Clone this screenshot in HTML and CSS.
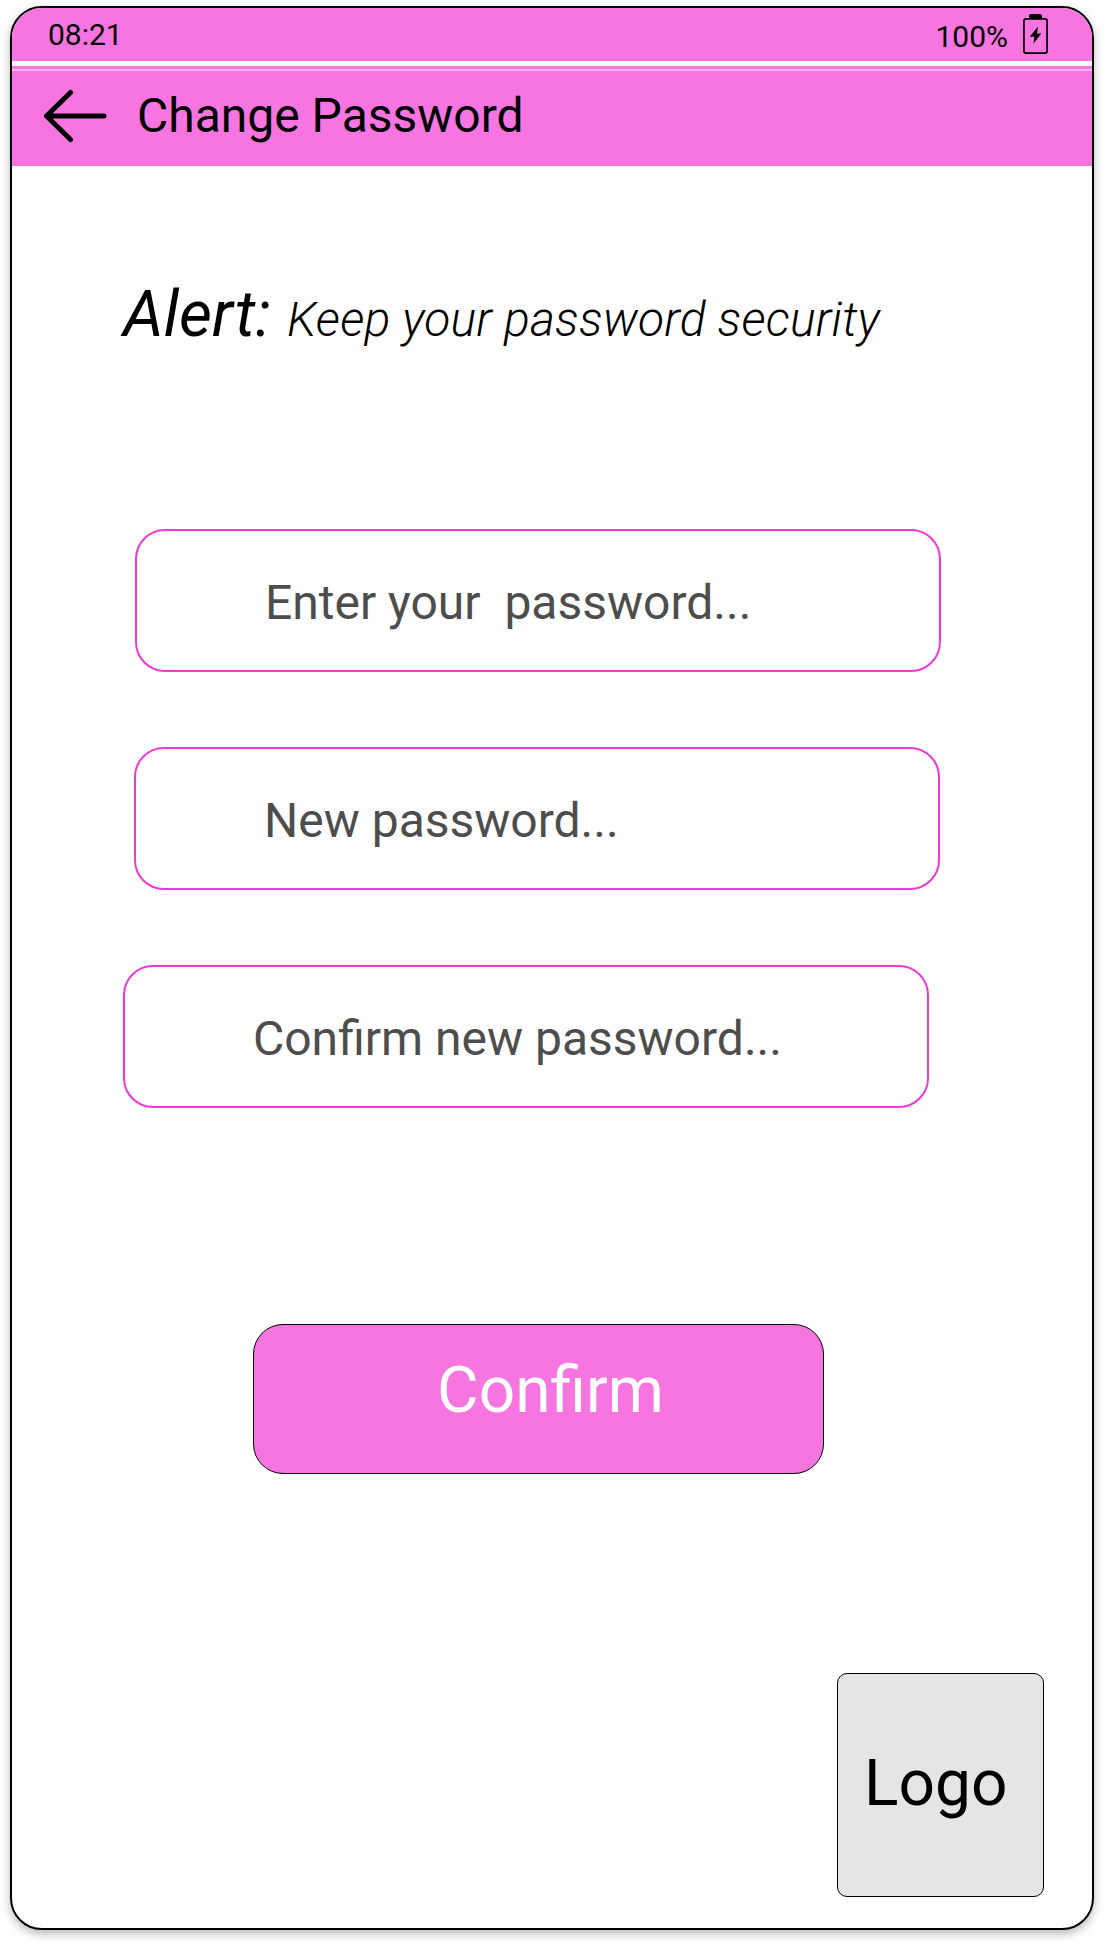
FILE: index.html
```html
<!DOCTYPE html>
<html lang="en">
<head>
<meta charset="utf-8">
<title>Change Password</title>
<link rel="stylesheet" href="styles.css">
</head>
<body>
<div class="phone">
  <div class="status">
    <span class="clock">08:21</span>
    <span class="percent">100%</span>
    <svg class="battery" width="25" height="40" viewBox="0 0 25 40">
      <rect x="0.9" y="4.9" width="23.2" height="34.2" rx="2" fill="none" stroke="#000" stroke-width="1.8"/>
      <path d="M6 4.5V2a2 2 0 0 1 2-2h9a2 2 0 0 1 2 2v2.500z"/>
      <path d="M15 12.500 6.700 22.700h4.700l-1 7L18.300 19.600h-4.300z"/>
    </svg>
  </div>
  <header class="header">
    <svg class="back" width="64" height="54" viewBox="0 0 64 54" fill="none" stroke="#000" stroke-width="5" stroke-linecap="round" stroke-linejoin="round">
      <path d="M61 27H3.500M27.500 3.500 3.500 27l24 23.500"/>
    </svg>
    <h1 class="title">Change Password</h1>
  </header>
  <main class="content">
    <p class="alert"><strong class="alert-label">Alert:</strong> <span class="alert-text">Keep your password security</span></p>
    <form class="form">
      <input class="field field-current" type="text" placeholder="Enter your  password...">
      <input class="field field-new" type="text" placeholder="New password...">
      <input class="field field-confirm" type="text" placeholder="Confirm new password...">
      <button class="submit" type="button">Confirm</button>
    </form>
    <div class="logo">Logo</div>
  </main>
</div>
</body>
</html>
```
FILE: styles.css
```css
* {
  box-sizing: border-box;
}

body {
  margin: 0;
  padding: 6px 10px 14px;
  background: #fff;
  color: #000;
  font-family: Roboto, sans-serif;
}

.phone {
  display: flex;
  flex-direction: column;
  height: 1924px;
  border: 2px solid #000;
  border-radius: 32px;
  background: #fff;
  box-shadow: 0 4px 10px rgba(0, 0, 0, 0.28);
  overflow: hidden;
}

.status {
  display: flex;
  align-items: center;
  height: 53px;
  padding: 0 44px 0 36px;
  background: #f675e0;
  font-size: 30px;
  line-height: 36px;
}

.percent {
  margin: 4px 15px 0 auto;
}

.battery {
  margin-bottom: 1px;
}

.header {
  display: flex;
  align-items: center;
  height: 100px;
  margin-top: 5px;
  padding-left: 31px;
  background: linear-gradient(#f675e0 3px, #f9b5ee 3px, #f9b5ee 5px, #f675e0 5px);
}

.title {
  margin: 0 0 0 30px;
  font-size: 48px;
  font-weight: 400;
  line-height: 56px;
}

.content {
  display: flex;
  flex: 1;
  flex-direction: column;
  padding: 111px 48px 31px 111px;
}

.alert {
  height: 76px;
  margin: 0;
  font-size: 64px;
  font-style: italic;
  letter-spacing: 0.2px;
  line-height: 76px;
}

.alert-label {
  font-weight: 400;
}

.alert-text {
  font-size: 48px;
  font-weight: 300;
}

.form {
  display: flex;
  flex-direction: column;
  gap: 75px;
  margin-top: 176px;
}

.field {
  width: 806px;
  height: 143px;
  margin: 0;
  padding: 4px 20px 0 128px;
  border: 2px solid #f237d9;
  border-radius: 30px;
  background: #fff;
  font: 400 48px Roboto, sans-serif;
}

.field::placeholder {
  color: #4d4d4d;
  opacity: 1;
  white-space: pre;
}

.field-current {
  margin-left: 12px;
}

.field-new {
  margin-left: 11px;
}

.submit {
  width: 571px;
  height: 150px;
  margin: 141px 0 0 130px;
  padding: 0 0 16px 183px;
  border: 1px solid #000;
  border-radius: 30px;
  background: #f675e0;
  color: #fff;
  font: 400 64px/76px Roboto, sans-serif;
  text-align: left;
}

.logo {
  display: flex;
  align-items: center;
  align-self: flex-end;
  width: 207px;
  height: 224px;
  margin-top: auto;
  padding: 0 0 4px 26px;
  border: 1px solid #000;
  border-radius: 10px;
  background: #e5e5e5;
  font-size: 64px;
}
```
